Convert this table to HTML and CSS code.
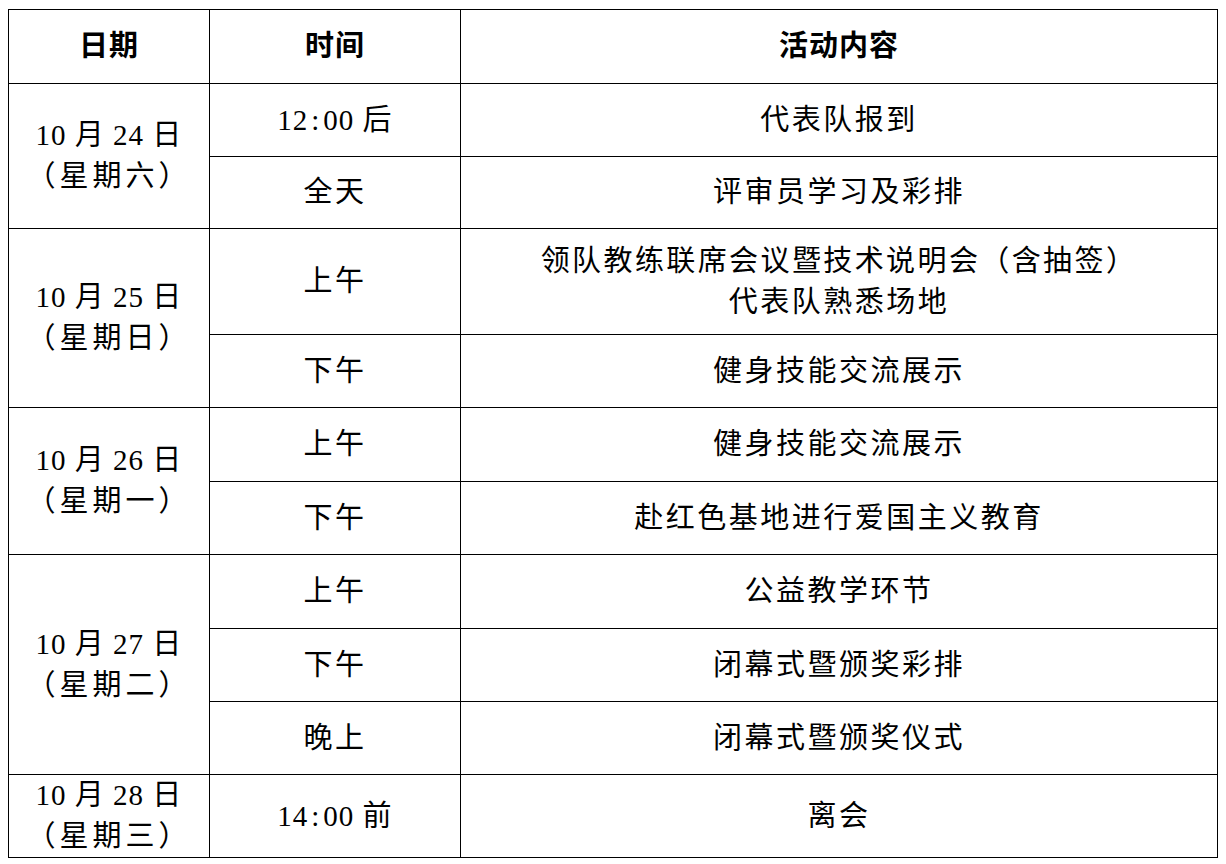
FILE: index.html
```html
<!DOCTYPE html>
<html lang="zh-CN">
<head>
<meta charset="utf-8">
<link rel="stylesheet" href="styles.css">
</head>
<body>
<table class="schedule">
  <colgroup>
    <col class="c-date">
    <col class="c-time">
    <col class="c-act">
  </colgroup>
  <thead>
    <tr class="h74">
      <th>日期</th>
      <th>时间</th>
      <th>活动内容</th>
    </tr>
  </thead>
  <tbody>
    <tr class="h73">
      <td rowspan="2" class="date">10 月 24 日<br><span class="wk">（星期六）</span></td>
      <td class="num">12<span class="colon">:</span>00 后</td>
      <td>代表队报到</td>
    </tr>
    <tr class="h72">
      <td>全天</td>
      <td>评审员学习及彩排</td>
    </tr>
    <tr class="h106">
      <td rowspan="2" class="date">10 月 25 日<br><span class="wk">（星期日）</span></td>
      <td>上午</td>
      <td class="two"><span class="wide">领队教练联席会议暨技术说明会（含抽签）</span><br>代表队熟悉场地</td>
    </tr>
    <tr class="h73">
      <td>下午</td>
      <td>健身技能交流展示</td>
    </tr>
    <tr class="h74">
      <td rowspan="2" class="date">10 月 26 日<br><span class="wk">（星期一）</span></td>
      <td>上午</td>
      <td>健身技能交流展示</td>
    </tr>
    <tr class="h73">
      <td>下午</td>
      <td>赴红色基地进行爱国主义教育</td>
    </tr>
    <tr class="h74">
      <td rowspan="3" class="date">10 月 27 日<br><span class="wk">（星期二）</span></td>
      <td>上午</td>
      <td>公益教学环节</td>
    </tr>
    <tr class="h73">
      <td>下午</td>
      <td>闭幕式暨颁奖彩排</td>
    </tr>
    <tr class="h73">
      <td>晚上</td>
      <td>闭幕式暨颁奖仪式</td>
    </tr>
    <tr class="h83">
      <td class="date">10 月 28 日<br><span class="wk">（星期三）</span></td>
      <td class="num">14<span class="colon">:</span>00 前</td>
      <td>离会</td>
    </tr>
  </tbody>
</table>
</body>
</html>
```

FILE: styles.css
```css
html, body {
  margin: 0;
  padding: 0;
  background: #fff;
}

body {
  padding: 9px 0 0 8px;
  font-family: "Liberation Serif", "Noto Sans CJK SC", serif;
  color: #000;
}

.schedule {
  border-collapse: collapse;
  table-layout: fixed;
  width: 1209px;
}

.c-date { width: 201px; }
.c-time { width: 251px; }
.c-act { width: 757px; }

.schedule th,
.schedule td {
  border: 1px solid #000;
  padding: 0;
  text-align: center;
  vertical-align: middle;
  font-size: 29px;
  line-height: 41px;
  font-weight: 400;
  letter-spacing: 2.5px;
}

.schedule th {
  font-weight: 700;
  letter-spacing: 1px;
}

.schedule td.date {
  letter-spacing: 1px;
}

.schedule td.num {
  letter-spacing: 1px;
}

.wk {
  letter-spacing: 4px;
}

.colon {
  display: inline-block;
  width: 15px;
  text-align: center;
}

.wide {
  letter-spacing: 2.4px;
}

.h72 { height: 72px; }
.h73 { height: 73px; }
.h74 { height: 74px; }
.h83 { height: 83px; }
.h106 { height: 106px; }
```
